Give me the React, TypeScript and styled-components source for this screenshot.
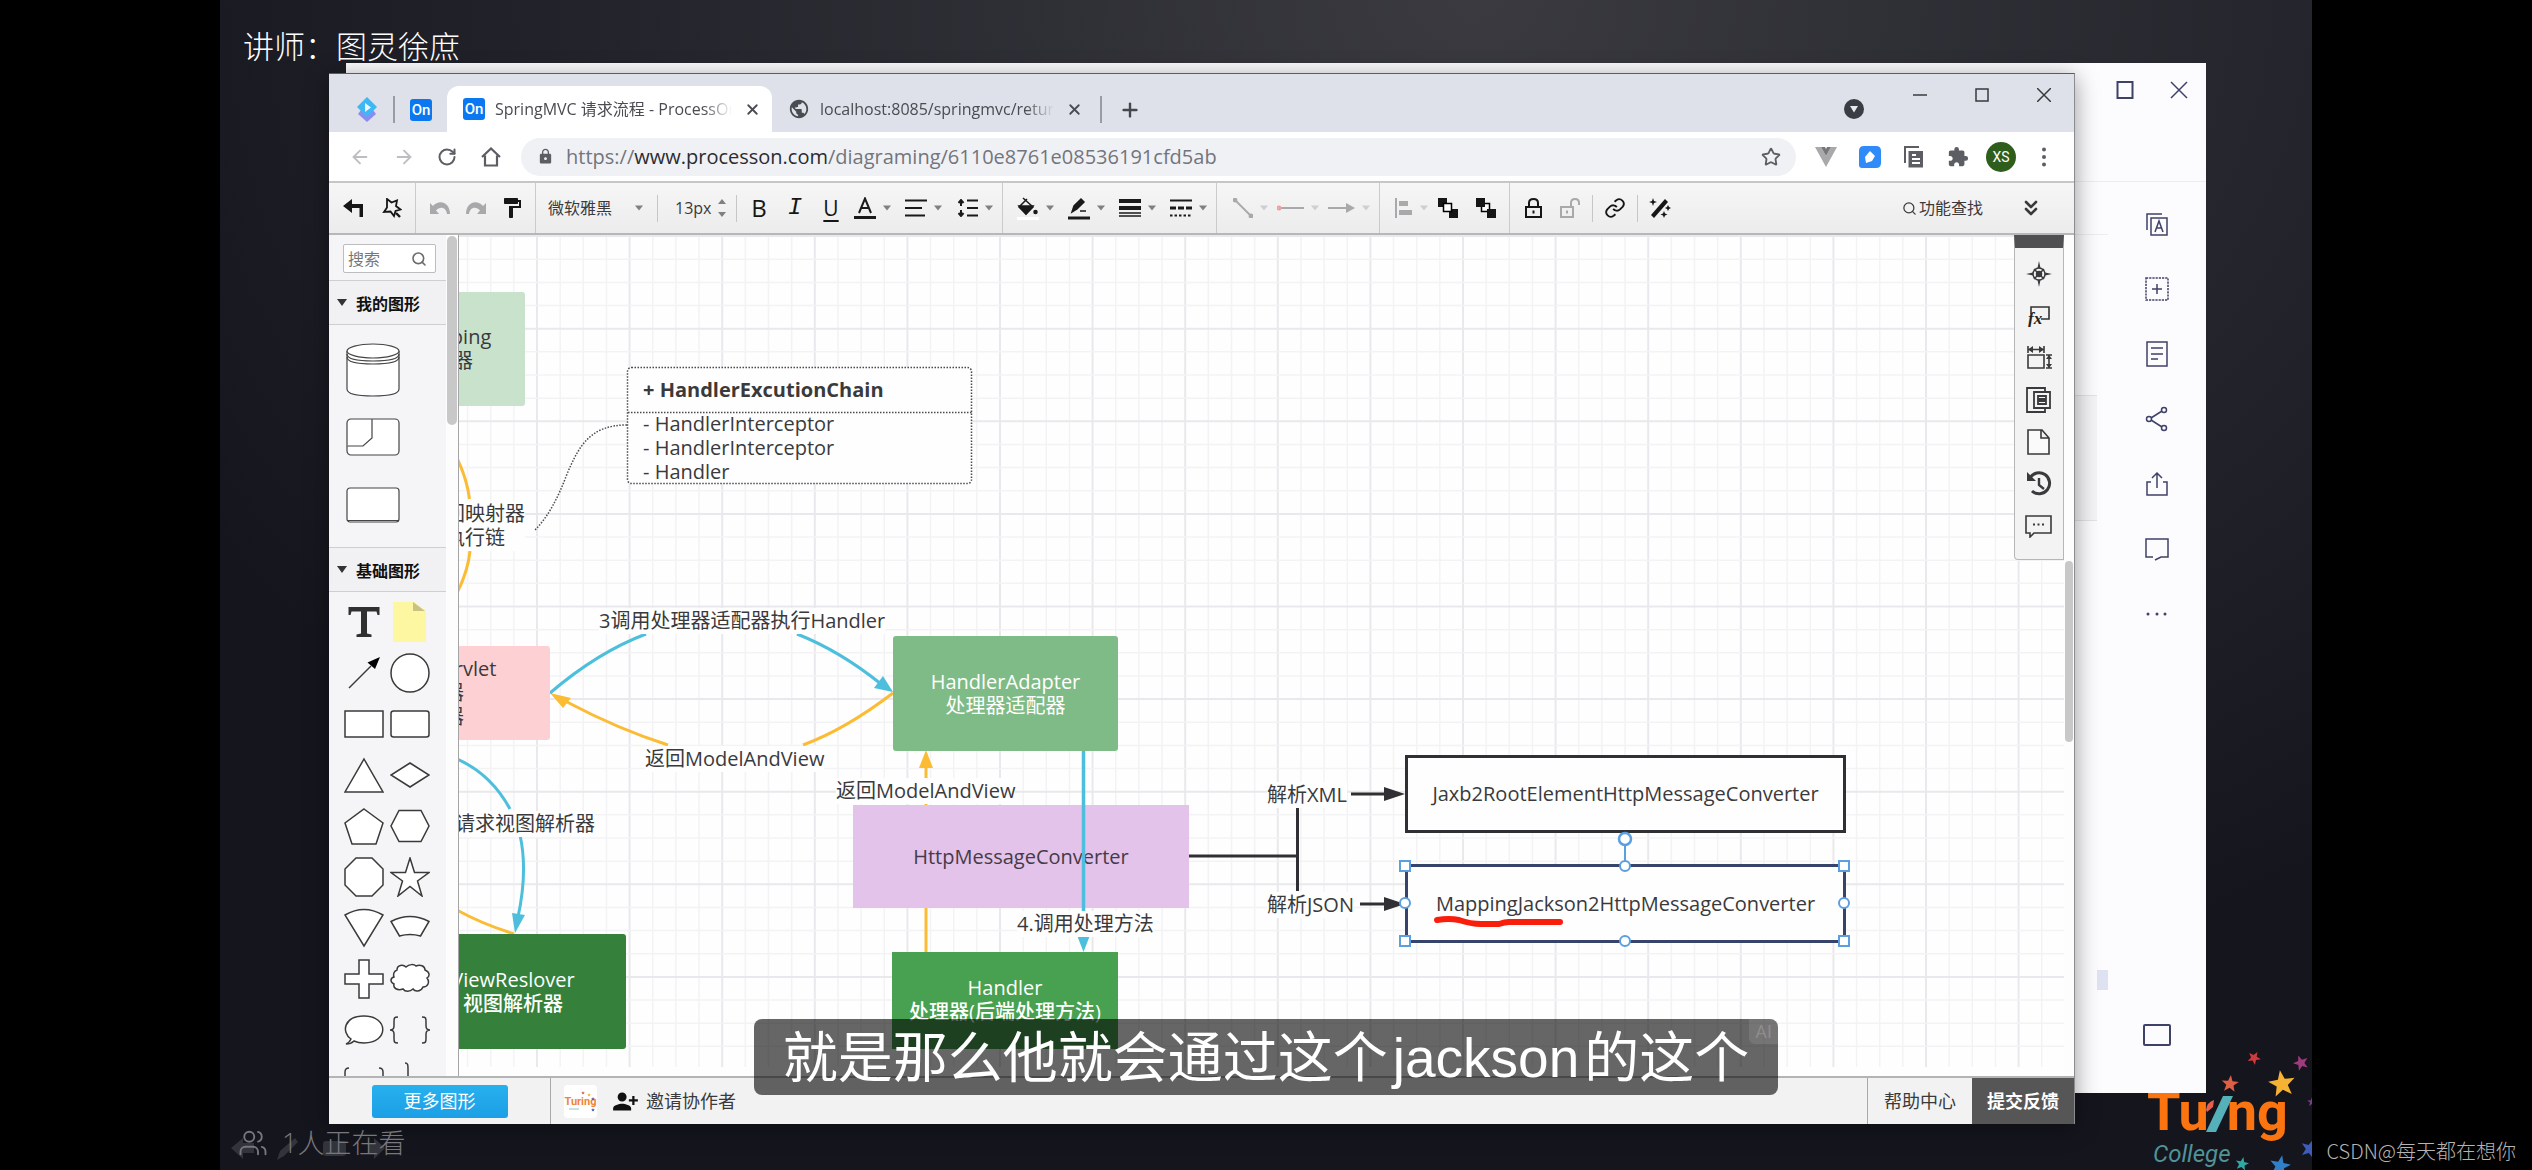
import React from 'react';
import styled, { createGlobalStyle, css } from 'styled-components';
import {
  ArrowLeft, ArrowRight, RotateCw, Star, Plus, X, Search, ChevronsDown, Users,
} from 'lucide-react';
import { MdFormatPaint, MdExtension, MdLock, MdPersonAdd, MdPublic } from 'react-icons/md';

const ui = `"Open Sans", "Noto Sans CJK SC", sans-serif`;
const scroll = { x: 459, y: 234 };
const ink = '#3a3a3c';
const sky = '#4dbfdc';
const amber = '#fbbc34';
const navy = '#3f4268';

const Global = createGlobalStyle`
  *, *::before, *::after { box-sizing: border-box; }
  body { margin: 0; background: #000; font-family: ${ui}; color: ${ink}; }
  button, input, select { font: inherit; color: inherit; border: 0; background: none; padding: 0; margin: 0; outline: 0; }
  a { color: inherit; text-decoration: none; }
  svg { display: block; flex: none; }
`;

const Page = styled.main`
  height: 100vh;
  padding: 0 220px;
  background: #000;
  position: relative;
  overflow: hidden;
`;
const Stage = styled.div`
  position: relative;
  height: 100%;
  overflow: hidden;
  background: radial-gradient(ellipse 70% 90% at 60% 0%, #3a3a40 0%, #25252d 55%, #15151e 100%);
`;
const Lecturer = styled.h1`
  margin: 0;
  padding: 23px 23px;
  font-size: 31px;
  line-height: 46px;
  font-weight: 300;
  color: #fff;
`;
const Watching = styled.div`
  position: absolute;
  left: 18px;
  bottom: 9px;
  display: flex;
  align-items: center;
  gap: 14px;
  font-size: 27px;
  line-height: 36px;
  font-weight: 300;
  color: #77777d;
`;
const Ghosts = styled.svg`
  position: absolute;
  left: 11px;
  bottom: 8px;
`;
const Watermark = styled.div`
  position: absolute;
  right: 16px;
  bottom: 4px;
  font: 20px/30px "Noto Sans CJK SC", sans-serif;
  font-weight: 300;
  color: #b4b4b4;
`;

/* Logo */
const Logo = styled.div`
  position: absolute;
  right: 0;
  bottom: 0;
  width: 166px;
  height: 120px;
`;
const LogoStars = styled.svg`
  position: absolute;
  inset: 0;
`;
const LogoWord = styled.div`
  position: absolute;
  left: 1px;
  top: 32px;
  display: flex;
  align-items: flex-start;
  font: 700 54px/60px Roboto, sans-serif;
  color: #fb7410;
`;
const LogoSub = styled.div`
  position: absolute;
  left: 7px;
  top: 92px;
  font: italic 24px/24px Roboto, sans-serif;
  color: #4f9396;
`;

/* Windows */
const BackWindow = styled.section`
  position: absolute;
  inset: 63px 106px 77px 126px;
  background: #fcfbfe;
  display: flex;
  flex-direction: column;
`;
const BackTitle = styled.div`
  height: 119px;
  padding: 13px 17px 0 0;
  display: flex;
  justify-content: flex-end;
  align-items: flex-start;
  gap: 34px;
  color: ${navy};
  border-bottom: 1px solid #ededf0;
`;
const BackBody = styled.div`
  flex: 1;
  display: flex;
  justify-content: flex-end;
`;
const BackStrip = styled.div`
  width: 34px;
  padding-top: 52px;
  display: flex;
  flex-direction: column;
  align-items: flex-start;
`;
const BackBlock = styled.div`
  width: 23px;
  margin-top: 160px;
  height: 126px;
  background: #f4f3f5;
  border: solid #e3e2e5;
  border-width: 1px 0;
`;
const BackTop = styled.div`
  align-self: stretch;
  border-top: 1px solid #ededf0;
`;
const BackMark = styled.div`
  width: 11px;
  height: 20px;
  margin: 449px 0 0 23px;
  background: #dfe2f0;
`;
const BackTools = styled.nav`
  width: 98px;
  padding: 28px 0 44px;
  display: flex;
  flex-direction: column;
  align-items: center;
  gap: 37px;
  color: ${navy};
`;
const PlainButton = styled.button`
  display: flex;
  align-items: center;
  justify-content: center;
  min-width: 20px;
  height: 28px;
`;
const LastButton = styled(PlainButton)`
  margin-top: auto;
`;

const Browser = styled.section`
  position: absolute;
  inset: 73px 237px 46px 109px;
  display: flex;
  flex-direction: column;
  background: #fff;
  border-top: 1px solid #5b5c62;
  border-right: 1px solid #8b8b90;
  box-shadow: 0 4px 22px rgba(0, 0, 0, 0.4);
`;

/* Tab strip */
const TabStrip = styled.header`
  height: 58px;
  padding-left: 18px;
  display: flex;
  align-items: flex-end;
  background: #dee1e9;
`;
const Pinned = styled.div`
  width: 40px;
  height: 45px;
  display: flex;
  align-items: center;
  justify-content: center;
`;
const TabRule = styled.i`
  width: 2px;
  height: 27px;
  margin: 0 6px 9px;
  background: #9a9ca4;
`;
const OnBadge = styled.span`
  width: 22px;
  height: 22px;
  flex: none;
  border-radius: 3px;
  background: #0b78f2;
  color: #fff;
  font: 500 15px/22px Roboto, sans-serif;
  text-align: center;
`;
const Tab = styled.div<{ $active?: boolean }>`
  width: 322px;
  height: 46px;
  padding: 0 10px 0 16px;
  display: flex;
  align-items: center;
  gap: 10px;
  color: #4a4c52;
  border-radius: 12px 12px 0 0;
  ${p => p.$active && css`
    width: 325px;
    margin-left: 6px;
    background: #fff;
  `}
`;
const TabText = styled.span`
  flex: 1;
  min-width: 0;
  overflow: hidden;
  white-space: nowrap;
  font-size: 16px;
  line-height: 24px;
  mask-image: linear-gradient(90deg, #000 88%, transparent);
`;
const NewTab = styled(PlainButton)`
  width: 44px;
  height: 45px;
  color: #45474d;
`;
const WindowButtons = styled.div`
  margin-left: auto;
  align-self: stretch;
  padding-right: 23px;
  display: flex;
  align-items: flex-start;
`;
const WinBtn = styled.button<{ $low?: boolean }>`
  width: 62px;
  height: 14px;
  margin-top: ${p => (p.$low ? '28px' : '14px')};
  padding-right: ${p => (p.$low ? '1px' : '0')};
  display: flex;
  align-items: center;
  justify-content: flex-end;
`;

/* Address row */
const AddressRow = styled.div`
  height: 51px;
  padding: 0 20px;
  display: flex;
  align-items: center;
  border-bottom: 2px solid #c6c6c8;
  color: #5c5e64;
`;
const NavBtn = styled(PlainButton)<{ $off?: boolean }>`
  width: 44px;
  justify-content: flex-start;
  color: ${p => (p.$off ? '#bdbdc2' : '#5c5e64')};
`;
const AddressPill = styled.div`
  flex: 1;
  height: 38px;
  margin: 0 8px 0 -4px;
  padding: 0 15px 0 16px;
  display: flex;
  align-items: center;
  border-radius: 19px;
  background: #f0f1f5;
`;
const Url = styled.div`
  flex: 1;
  padding-left: 12px;
  font-size: 20px;
  line-height: 28px;
  color: #73757c;
  b { font-weight: 400; color: #2b2c30; }
`;
const ExtBtn = styled(PlainButton)`
  width: 44px;
`;
const Profile = styled.button`
  width: 30px;
  height: 30px;
  margin: 0 18px 0 6px;
  border-radius: 50%;
  background: #2f5e1c;
  color: #fff;
  font: 14px/30px Roboto, sans-serif;
`;

/* Editor toolbar */
const Toolbar = styled.div`
  height: 52px;
  display: flex;
  align-items: stretch;
  background: linear-gradient(#f6f6f7, #ececed);
  border-bottom: 2px solid #b7b7ba;
`;
const Group = styled.div<{ $last?: boolean }>`
  display: flex;
  align-items: center;
  ${p => !p.$last && css`border-right: 1px solid #cbcbce;`}
`;
const Tools = styled(Group)<{ $gap?: number }>`
  padding: 0 5px 0 6px;
  gap: ${p => p.$gap || 0}px;
`;
const Drops = styled(Group)`
  padding-right: 9px;
`;
const Tool = styled.button<{ $off?: boolean }>`
  width: 36px;
  height: 36px;
  display: flex;
  align-items: center;
  justify-content: center;
  color: ${p => (p.$off ? '#a9a9ac' : '#161616')};
`;
const Drop = styled.button<{ $off?: boolean; $tight?: boolean }>`
  width: ${p => (p.$tight ? '42px' : '51px')};
  height: 36px;
  display: flex;
  align-items: center;
  justify-content: flex-end;
  gap: 7px;
  color: ${p => (p.$off ? '#a9a9ac' : '#1a1a1a')};
`;
const Letter = styled.span<{ $kind: 'b' | 'i' | 'u' }>`
  font: 24px/28px "Open Sans", sans-serif;
  ${p => p.$kind === 'i' && css`font-family: "Liberation Mono", monospace; font-style: italic;`}
  ${p => p.$kind === 'u' && css`font-size: 21px; text-decoration: underline; text-underline-offset: 4px;`}
`;
const Rule = styled.i`
  width: 1px;
  height: 27px;
  margin: 0 4px;
  background: #c6c6c9;
`;
const FontSelect = styled.div`
  width: 117px;
  padding: 0 10px 0 12px;
  display: flex;
  align-items: center;
  justify-content: space-between;
  font-size: 16px;
  select { appearance: none; width: 80px; height: 28px; }
`;
const SizeInput = styled.div`
  width: 70px;
  padding-left: 13px;
  display: flex;
  align-items: center;
  gap: 3px;
  font-size: 16px;
  input { width: 40px; height: 28px; }
`;
const Finder = styled.div`
  margin-left: auto;
  padding-right: 31px;
  display: flex;
  align-items: center;
  gap: 36px;
`;
const FindBtn = styled.button`
  display: flex;
  align-items: center;
  gap: 2px;
  font-size: 16px;
  line-height: 24px;
`;

/* Workspace */
const Workspace = styled.div`
  flex: 1;
  min-height: 0;
  display: flex;
`;
const Side = styled.aside`
  width: 117px;
  background: #f5f5f8;
  display: flex;
  flex-direction: column;
  overflow: hidden;
`;
const SearchBox = styled.label`
  margin: 9px 10px 7px 14px;
  height: 29px;
  flex: none;
  padding: 0 8px 0 4px;
  display: flex;
  align-items: center;
  justify-content: space-between;
  background: #fff;
  border: 1px solid #bdbdc0;
  border-radius: 2px;
  font-size: 16px;
  color: #6b6b6e;
  input { width: 56px; height: 24px; }
  input::placeholder { color: #77777a; opacity: 1; }
`;
const SideHead = styled.button`
  height: 45px;
  flex: none;
  padding-left: 8px;
  display: flex;
  align-items: center;
  gap: 9px;
  border: solid #cfcfd2;
  border-width: 1px 0;
  background: #f1f1f3;
  font-size: 16px;
  font-weight: 700;
  color: #111;
`;
const Mine = styled.div`
  flex: none;
  height: 222px;
  padding: 18px 0 0 17px;
  display: flex;
  flex-direction: column;
  gap: 21px;
  svg:last-child { margin-top: 10px; }
`;
const Shapes = styled.div`
  flex: none;
  padding: 4px 0 0 12px;
  display: grid;
  grid-template-columns: 46px 46px;
  grid-auto-rows: 51px;
`;
const ShapeCell = styled.button`
  display: flex;
  align-items: center;
  justify-content: center;
`;
const Track = styled.div<{ $edge?: boolean }>`
  width: ${p => (p.$edge ? '10px' : '13px')};
  padding: 1px 1px 0;
  background: #fdfdfe;
  ${p => !p.$edge && css`border-right: 1px solid #a5a5a8;`}
`;
const Thumb = styled.div<{ $h: number; $skip?: number }>`
  height: ${p => p.$h}px;
  margin-top: ${p => p.$skip || 0}px;
  border-radius: 5px;
  background: #c8c8c9;
`;

/* Canvas */
const Canvas = styled.div`
  position: relative;
  flex: 1;
  min-width: 0;
  overflow: hidden;
  background: #fefefe;
`;
const Layer = styled.svg`
  position: absolute;
  left: 0;
  top: 0;
`;
type Box = { $x: number; $y: number; $w: number; $h: number };
const Node = styled.div<Box & { $bg: string; $fg?: string; $round?: number; $line?: string; $strong?: boolean }>`
  position: absolute;
  left: ${p => p.$x - scroll.x}px;
  top: ${p => p.$y - scroll.y}px;
  width: ${p => p.$w}px;
  height: ${p => p.$h}px;
  display: flex;
  flex-direction: column;
  align-items: center;
  justify-content: center;
  border-radius: ${p => p.$round || 0}px;
  background: ${p => p.$bg};
  color: ${p => p.$fg || ink};
  ${p => p.$line && css`border: 3px solid ${p.$line};`}
  font-size: 20px;
  line-height: 24px;
  font-weight: ${p => (p.$strong ? 500 : 400)};
  white-space: nowrap;
`;
const TopNode = styled(Node)`
  justify-content: flex-start;
  padding-top: 24px;
`;
const EdgeLabel = styled.div<{ $x: number; $y: number }>`
  position: absolute;
  left: ${p => p.$x - scroll.x}px;
  top: ${p => p.$y - scroll.y}px;
  padding: 1px 0;
  background: #fefefe;
  font-size: 20px;
  line-height: 24px;
  text-align: center;
  white-space: nowrap;
`;
const ClassBox = styled.div<Box>`
  position: absolute;
  left: ${p => p.$x - scroll.x}px;
  top: ${p => p.$y - scroll.y}px;
  width: ${p => p.$w}px;
  height: ${p => p.$h}px;
  padding-left: 16px;
  font-size: 20px;
  line-height: 24px;
`;
const ClassTitle = styled.div`
  height: 45px;
  line-height: 45px;
  font-weight: 700;
`;
const Dock = styled.div`
  position: absolute;
  right: 0;
  top: 0;
  width: 50px;
  height: 325px;
  display: flex;
  flex-direction: column;
  align-items: center;
  background: #f3f3f3;
  border: 1px solid #b6b6b8;
  border-top: 13px solid #505052;
  border-radius: 0 0 0 4px;
  padding-top: 12px;
  gap: 14px;
`;

/* Footer */
const Footer = styled.footer`
  height: 48px;
  display: flex;
  align-items: stretch;
  background: #f2f2f2;
  border-top: 2px solid #b4b4b6;
  font-size: 18px;
  line-height: 26px;
`;
const MoreCell = styled.div`
  width: 222px;
  display: flex;
  align-items: center;
  justify-content: center;
  border-right: 1px solid #a9a9ab;
`;
const MoreBtn = styled.button`
  width: 136px;
  height: 33px;
  border-radius: 3px;
  background: linear-gradient(#27b0ee, #1c9fe6);
  color: #fff;
`;
const Invite = styled.button`
  display: flex;
  align-items: center;
  gap: 7px;
  padding-left: 15px;
`;
const InviteIcon = styled(MdPersonAdd)`
  transform: scaleX(-1);
  color: #111;
`;
const Avatar = styled.span`
  width: 33px;
  height: 33px;
  border-radius: 4px;
  background: #fff;
  font: 700 11px/33px Roboto, sans-serif;
  color: #f08436;
  text-align: center;
  position: relative;
`;
const AvatarStars = styled.svg`
  position: absolute;
  inset: 0;
`;
const Avatars = styled.div`
  display: flex;
  align-items: center;
  padding-left: 13px;
`;
const Help = styled.a`
  margin-left: auto;
  width: 105px;
  display: flex;
  align-items: center;
  justify-content: center;
  border-left: 1px solid #a9a9ab;
`;
const Feedback = styled.button`
  width: 102px;
  background: #565656;
  color: #fff;
  font-weight: 700;
`;

/* Subtitle */
const Subtitle = styled.div`
  position: absolute;
  left: 50%;
  bottom: 75px;
  width: 1024px;
  height: 76px;
  margin-left: -512px;
  border-radius: 8px;
  background: rgba(0, 0, 0, 0.6);
  color: #fff;
  font: 55px/79px "Liberation Sans", "Noto Sans CJK SC", sans-serif;
  text-align: center;
  white-space: nowrap;
`;
const Latin = styled.span`
  margin: 0 5px;
`;
const AiBadge = styled.span`
  position: absolute;
  right: 0;
  top: 0;
  width: 29px;
  height: 25px;
  border-radius: 0 8px 0 6px;
  background: rgba(255, 255, 255, 0.1);
  color: #8d8d8d;
  font: 18px/25px Roboto, sans-serif;
`;

const Caret = ({ faint }: { faint?: boolean }) => (
  <svg width="8" height="6" viewBox="0 0 8 6"><path d="M0 0.5h8L4 5.5z" fill={faint ? '#cfcfd1' : '#808083'} /></svg>
);

const Ico = ({ w = 24, h = 24, sw = 2, fill = 'none', children }: { w?: number; h?: number; sw?: number; fill?: string; children: React.ReactNode }) => (
  <svg width={w} height={h} viewBox={`0 0 ${w} ${h}`} fill={fill} stroke="currentColor" strokeWidth={sw}>{children}</svg>
);

const basicShapes: React.ReactNode[] = [
  <path key="t" d="M4.500 5h31v8h-2l-1-3.500h-9.500v22l4.500 1v2.500h-15v-2.500l4.500-1v-22H7.500L6.500 13h-2z" fill="#303030" stroke="none" />,
  <g key="n" stroke="none"><path d="M3 0h21l12 9v31H3z" fill="#fdf7a2" /><path d="M23 0v9h12z" fill="#c9c383" /></g>,
  <g key="a"><path d="M5 35L27 13" /><path d="M36 4L31 16 23.500 9.500z" fill="#000" stroke="none" /></g>,
  <circle key="c" cx="20" cy="20" r="19" />,
  <rect key="r" x="1" y="7" width="38" height="26" />,
  <rect key="rr" x="1" y="7" width="38" height="26" rx="2.500" />,
  <path key="tr" d="M20 4l19 33H1z" />,
  <path key="d" d="M20 8l19 12-19 12L1 20z" />,
  <path key="p" d="M20 3l19 14-7 21H8L1 17z" />,
  <path key="h" d="M9 4.500h22l8 15.500-8 15.500H9L1 20z" />,
  <path key="o" d="M12 1h16l11 11v16L28 39H12L1 28V12z" />,
  <path key="s" d="M20 1l4.500 14.500H39L27.500 24 32 39 20 29.500 8 39l4.500-15L1 15.500h14.500z" />,
  <path key="f" d="M1 7q19-11 38 0L20 38z" />,
  <path key="f2" d="M1 13.500q19-10 38 0L30.500 28q-10.500-3-21 0z" />,
  <path key="x" d="M15 1h10v14h14v10H25v14H15V25H1V15h14z" />,
  <path key="cl" d="M7 11c0-5 6-6 9-3 3-3 8-3 10-1 4-2 9 0 9 4 5 2 5 6 2 8 3 4 1 9-4 9-2 5-8 5-10 2-3 3-8 3-10 0-6 2-10-1-9-5-4-2-4-6 0-7-1-3 0-6 3-7z" />,
  <path key="b" d="M7 29C-3 22 0 6 20 6c25 0 25 27 0 27-5 0-8-1-10-2-2 2-5 3-8 3 3-1 4-3 5-5z" />,
  <path key="br" fill="none" d="M8 7c-4 0-4 1-4 5v4c0 3-1 4-4 4 3 0 4 1 4 4v4c0 4 0 5 4 5M32 7c4 0 4 1 4 5v4c0 3 1 4 4 4-3 0-4 1-4 4v4c0 4 0 5-4 5" />,
  <path key="sq" fill="none" d="M5 7c-3 0-4 1-4 4v28M35 7c3 0 4 1 4 4v28" />,
  <path key="cb" fill="none" d="M15 2c3 0 3 2 3 6v31" />,
];

const gridLines = () => {
  const step = 23.15;
  const out: React.ReactNode[] = [];
  const line = (key: string, major: boolean, at: { x1: number; x2: number; y1: number; y2: number }) => (
    <line key={key} {...at} stroke={major ? '#e9e9ed' : '#f3f3f6'} strokeWidth={major ? 2 : 1.5} />
  );
  for (let i = -3; i <= 66; i++) {
    const x = 537 + i * step;
    out.push(line(`v${i}`, i % 4 === 0, { x1: x, x2: x, y1: 234, y2: 1066 }));
  }
  for (let i = -4; i <= 31; i++) {
    const y = 327.7 + i * step;
    out.push(line(`h${i}`, i % 4 === 0, { x1: 459, x2: 2064, y1: y, y2: y }));
  }
  return out;
};

const starPath = (cx: number, cy: number, r: number, turn = 0) => {
  const pts: string[] = [];
  for (let i = 0; i < 10; i++) {
    const rad = i % 2 ? r * 0.42 : r;
    const a = (Math.PI / 5) * i - Math.PI / 2 + turn;
    pts.push(`${(cx + rad * Math.cos(a)).toFixed(1)},${(cy + rad * Math.sin(a)).toFixed(1)}`);
  }
  return pts.join(' ');
};

const Handles = () => (
  <g fill="#fff" stroke="#5b9fe0" strokeWidth="2">
    <path d="M1625 843v17" />
    {[[1405, 865], [1844, 865], [1405, 940], [1844, 940]].map(([x, y]) => (
      <rect key={`${x}-${y}`} x={x - 5} y={y - 5} width="10" height="10" />
    ))}
    {[[1625, 865], [1625, 940], [1405, 902], [1844, 902]].map(([x, y]) => (
      <circle key={`${x}-${y}`} cx={x} cy={y} r="5" />
    ))}
    <circle cx="1625" cy="838" r="6" strokeWidth="2.500" />
  </g>
);

export default function App() {
  return (
    <Page>
      <Global />
      <Stage>
        <Lecturer>讲师：图灵徐庶</Lecturer>

        <Logo>
          <LogoStars width="166" height="120" viewBox="0 0 166 120">
            <polygon points={starPath(108, 8, 7, 0.5)} fill="#cf3b3d" />
            <polygon points={starPath(155, 13, 8, 0.9)} fill="#9f3b7c" />
            <polygon points={starPath(84, 34, 9, 0.1)} fill="#dd5f45" />
            <polygon points={starPath(136, 34, 14, -0.15)} fill="#f6b232" />
            <polygon points={starPath(166, 52, 5)} fill="#7a3b8c" />
            <polygon points={starPath(96, 114, 7, 0.2)} fill="#2fa7a2" />
            <polygon points={starPath(134, 116, 11, 0.2)} fill="#2f7fc9" />
            <polygon points={starPath(164, 99, 10, 0.3)} fill="#3d5cb6" />
          </LogoStars>
          <LogoWord>
            Tu
            <svg width="18" height="60" viewBox="0 0 18 60" overflow="visible"><path d="M-3 28q1-8 8-10l-1 7-6 5z" fill="#e8604c" /><path d="M-3 50L14 14h10L7 50z" fill="#56b0ba" /></svg>
            ng
          </LogoWord>
          <LogoSub>College</LogoSub>
        </Logo>

        <BackWindow>
          <BackTitle>
            <PlainButton aria-label="最大化"><Ico w={18} h={18} sw={2}><path d="M1.500 1h15v16h-15z" /></Ico></PlainButton>
            <PlainButton aria-label="关闭"><Ico w={18} h={18} sw={1.5}><path d="M1 1l16 16M17 1L1 17" /></Ico></PlainButton>
          </BackTitle>
          <BackBody>
            <BackStrip>
              <BackTop />
              <BackBlock />
              <BackMark />
            </BackStrip>
            <BackTools>
              <PlainButton aria-label="翻译"><Ico w={24} h={24} sw={1.5}><path d="M2 18V2h15M6 6h16v17H6zM10 20l4-11 4 11M11.500 16h5" /></Ico></PlainButton>
              <PlainButton aria-label="截图"><Ico w={24} h={24} sw={1.5}><path strokeDasharray="2.200 1" d="M1 1h22v22H1z" /><path d="M12 7v10M7 12h10" /></Ico></PlainButton>
              <PlainButton aria-label="文档"><Ico w={22} h={26} sw={1.5}><path d="M1 1h20v24H1zM5 7h12M5 13h12M5 18h7" /></Ico></PlainButton>
              <PlainButton aria-label="分享"><Ico w={24} h={26} sw={1.5}><circle cx="4" cy="13" r="2.500" /><circle cx="19" cy="4" r="2.500" /><circle cx="19" cy="22" r="2.500" /><path d="M6 12L17 5M6 14l11 7" /></Ico></PlainButton>
              <PlainButton aria-label="导出"><Ico w={24} h={26} sw={1.5}><path d="M6 11H2v13h20V11h-4M12 17V2M7 7l5-5 5 5" /></Ico></PlainButton>
              <PlainButton aria-label="评论"><Ico w={24} h={24} sw={1.5}><path d="M8 20H1V2h22v18h-7l-6 3" /></Ico></PlainButton>
              <PlainButton aria-label="更多"><Ico w={24} h={4} fill="currentColor" sw={0}><circle cx="3" cy="2" r="1.500" /><circle cx="12" cy="2" r="1.500" /><circle cx="20" cy="2" r="1.500" /></Ico></PlainButton>
              <LastButton aria-label="窗口"><Ico w={28} h={22}><rect x="1" y="1" width="26" height="20" rx="1" /></Ico></LastButton>
            </BackTools>
          </BackBody>
        </BackWindow>

        <Browser>
          <TabStrip>
            <Pinned>
              <svg width="22" height="26" viewBox="0 0 22 26"><path d="M11 25L2 17l3-4 6 5 6-5 3 4z" fill="#8b8cf0" /><path d="M11 0l10 10-10 10L1 10z" fill="#3db8f5" /><path d="M9 6l6 4.500-6 4.500z" fill="#e9f8ff" /></svg>
            </Pinned>
            <TabRule />
            <Pinned><OnBadge>On</OnBadge></Pinned>
            <Tab $active>
              <OnBadge>On</OnBadge>
              <TabText>SpringMVC 请求流程 - ProcessOn</TabText>
              <PlainButton aria-label="关闭标签页"><X size={17} strokeWidth={2.6} /></PlainButton>
            </Tab>
            <Tab>
              <MdPublic size={22} />
              <TabText>localhost:8085/springmvc/return</TabText>
              <PlainButton aria-label="关闭标签页"><X size={17} strokeWidth={2.6} /></PlainButton>
            </Tab>
            <TabRule />
            <NewTab aria-label="新标签页"><Plus size={22} strokeWidth={2.6} /></NewTab>
            <WindowButtons>
              <WinBtn $low aria-label="搜索标签页"><svg width="20" height="20" viewBox="0 0 20 20"><circle cx="10" cy="10" r="10" fill="#3b3d44" /><path d="M6 7h8l-4 6.500z" fill="#e8eaf0" /></svg></WinBtn>
              <WinBtn aria-label="最小化"><Ico w={14} h={14} sw={1.5}><path d="M0 7h14" /></Ico></WinBtn>
              <WinBtn aria-label="最大化"><Ico w={14} h={14} sw={1.5}><path d="M1 1h12v12H1z" /></Ico></WinBtn>
              <WinBtn aria-label="关闭"><Ico w={14} h={14} sw={1.5}><path d="M0 0l14 14M14 0L0 14" /></Ico></WinBtn>
            </WindowButtons>
          </TabStrip>

          <AddressRow>
            <NavBtn $off aria-label="后退"><ArrowLeft size={22} /></NavBtn>
            <NavBtn $off aria-label="前进"><ArrowRight size={22} /></NavBtn>
            <NavBtn aria-label="刷新"><RotateCw size={20} strokeWidth={2.4} /></NavBtn>
            <NavBtn aria-label="主页"><Ico w={20} h={20} sw={2.2}><path d="M1 10L10 1.500 19 10M4 8.500V18.500h12V8.500" /></Ico></NavBtn>
            <AddressPill>
              <MdLock size={17} />
              <Url>https://<b>www.processon.com</b>/diagraming/6110e8761e08536191cfd5ab</Url>
              <Star size={20} strokeWidth={2.2} />
            </AddressPill>
            <ExtBtn aria-label="Vue"><svg width="22" height="20" viewBox="0 0 22 20"><path d="M0 0h6l5 9 5-9h6L11 20z" fill="#a9a9ac" /><path d="M6 0h4l1 2 1-2h4l-5 9z" fill="#77777a" /></svg></ExtBtn>
            <ExtBtn aria-label="扩展"><svg width="22" height="22" viewBox="0 0 22 22"><path d="M5 0h12q5 0 5 5v12q0 5-5 5H3q-3 0-3-3V5q0-5 5-5z" fill="#2f8bf7" /><path d="M11 5l5 5-3 5-6 2-1-6z" fill="#fff" /></svg></ExtBtn>
            <ExtBtn aria-label="复制"><Ico w={20} h={22} sw={2}><path d="M1 17V1h14" /><path d="M4.500 5H19v16.500H4.500z" fill="currentColor" stroke="none" /><path d="M8 9h4M8 13h8M8 17h8" stroke="#fff" /></Ico></ExtBtn>
            <ExtBtn aria-label="扩展程序"><MdExtension size={22} /></ExtBtn>
            <Profile>XS</Profile>
            <PlainButton aria-label="菜单"><Ico w={4} h={20} fill="currentColor" sw={0}><circle cx="2" cy="2.500" r="2" /><circle cx="2" cy="10" r="2" /><circle cx="2" cy="17.500" r="2" /></Ico></PlainButton>
          </AddressRow>

          <Toolbar>
            <Tools $gap={3}>
              <Tool aria-label="返回"><Ico w={20} h={18} sw={0} fill="currentColor"><path d="M0 7l9-7v5h11v13h-3.500V9H9v5z" /></Ico></Tool>
              <Tool aria-label="收藏"><Ico w={20} h={20} sw={1.8}><path d="M5 1l4.500 3.500L15 2.500l-1 5.500 4.500 3.500-5 1.500-1.500 5-3.500-4.500-6.500.500L5 9.500z" /><path d="M14 15l4 4" strokeWidth="2.400" /></Ico></Tool>
            </Tools>
            <Tools>
              <Tool $off aria-label="撤销"><Ico w={20} h={14} sw={0} fill="currentColor"><path d="M0 2v11h9L6 9.500C10 5 16 6 17 13h3C20 1 9-2 3 5z" /></Ico></Tool>
              <Tool $off aria-label="重做"><Ico w={20} h={14} sw={0} fill="currentColor"><path d="M20 2v11h-9l3-3.500C10 5 4 6 3 13H0C0 1 11-2 17 5z" /></Ico></Tool>
              <Tool aria-label="格式刷"><MdFormatPaint size={24} /></Tool>
            </Tools>
            <Drops>
              <FontSelect>
                <select aria-label="字体" defaultValue="微软雅黑"><option>微软雅黑</option></select>
                <Caret />
              </FontSelect>
              <Rule />
              <SizeInput>
                <input aria-label="字号" defaultValue="13px" />
                <svg width="8" height="18" viewBox="0 0 8 18"><path d="M0 5h8L4 0zM0 13h8l-4 5z" fill="#808083" /></svg>
              </SizeInput>
              <Rule />
              <Tool aria-label="加粗"><Letter $kind="b">B</Letter></Tool>
              <Tool aria-label="斜体"><Letter $kind="i">I</Letter></Tool>
              <Tool aria-label="下划线"><Letter $kind="u">U</Letter></Tool>
              <Drop $tight aria-label="文字颜色"><Ico w={22} h={22} sw={2}><path d="M5 16L11 1.500 17 16M7 11h8" /><path d="M0 20.500h22" strokeWidth="3" /></Ico><Caret /></Drop>
              <Drop aria-label="对齐"><Ico w={22} h={18} sw={2}><path d="M0 1.500h22M0 9h17M0 16.500h20" /></Ico><Caret /></Drop>
              <Drop aria-label="行高"><Ico w={20} h={18} sw={2}><path d="M9 1.500h11M9 9h11M9 16.500h11M3 2v5M3 11v5M0.500 4L3 1l2.500 3M0.500 14L3 17l2.500-3" /></Ico><Caret /></Drop>
            </Drops>
            <Drops>
              <Drop aria-label="填充"><Ico w={22} h={24} sw={1.5}><path d="M6 2l10 9-7 7-7-7 8-8" fill="none" /><path d="M2 10h14l-7 8z" fill="currentColor" /><circle cx="18.500" cy="16" r="1.500" fill="currentColor" /><path d="M0 22.500h22" stroke="#fff" strokeWidth="3" /></Ico><Caret /></Drop>
              <Drop aria-label="线条颜色"><Ico w={22} h={24} sw={1.5}><path d="M4 16l2-6 7-7 3 3-7 7z" fill="currentColor" /><path d="M12 15h6" /><path d="M0 22h22" strokeWidth="3" /></Ico><Caret /></Drop>
              <Drop aria-label="线宽"><Ico w={22} h={18} sw={4}><path d="M0 2h22M0 9h22" /><path d="M0 14h22M0 17h22" strokeWidth="1.500" /></Ico><Caret /></Drop>
              <Drop aria-label="线型"><Ico w={22} h={18} sw={2}><path d="M0 1.500h22" /><path d="M0 9h6M8 9h6M16 9h6" strokeWidth="3" /><path d="M0 16.500h22" strokeDasharray="2.500 2" /></Ico><Caret /></Drop>
            </Drops>
            <Drops>
              <Drop $off aria-label="连线类型"><Ico w={20} h={20} sw={1.8}><path d="M2 2l16 16" /><circle cx="2" cy="2" r="1.500" fill="currentColor" /><circle cx="18" cy="18" r="1.500" fill="currentColor" /></Ico><Caret faint /></Drop>
              <Drop $off aria-label="起点"><Ico w={27} h={8} sw={2}><path d="M2 4h25" /><circle cx="2" cy="4" r="1.500" stroke="#f0a0a0" /></Ico><Caret faint /></Drop>
              <Drop $off aria-label="终点"><Ico w={27} h={10} sw={2}><path d="M0 5h20" /><path d="M18 0l9 5-9 5z" fill="currentColor" stroke="none" /></Ico><Caret faint /></Drop>
            </Drops>
            <Tools $gap={2}>
              <Drop $off $tight aria-label="对齐图形"><Ico w={18} h={20} sw={2}><path d="M1 0v20" /><path d="M4 3h9v5H4zM4 12h13v5H4z" fill="currentColor" stroke="none" /></Ico><Caret faint /></Drop>
              <Tool aria-label="置于顶层"><Ico w={20} h={20} sw={0} fill="currentColor"><path d="M0 0h9v9H0zM11 11h9v9h-9z" /><path d="M5.500 5.500h8v8h-8z" fill="#fff" stroke="#000" strokeWidth="1.500" /></Ico></Tool>
              <Tool aria-label="置于底层"><Ico w={20} h={20} sw={0} fill="currentColor"><path d="M5.500 5.500h8v8h-8z" fill="#fff" stroke="#000" strokeWidth="1.500" /><path d="M0 0h9v9H0zM11 11h9v9h-9z" /></Ico></Tool>
            </Tools>
            <Tools $last>
              <Tool aria-label="锁定"><Ico w={18} h={20} sw={2}><path d="M1 9h15v10H1zM4 9V5q0-4 4.500-4T13 5v4M8.500 12.500v3" /></Ico></Tool>
              <Tool $off aria-label="解锁"><Ico w={20} h={20} sw={2}><path d="M1 9h12v10H1zM11 9V5q0-4 4-4t4 4v2M7 12.500v3" /></Ico></Tool>
              <Rule />
              <Tool aria-label="链接"><svg width="22" height="22" viewBox="0 0 24 24" fill="none" stroke="currentColor" strokeWidth="2"><path d="M10 13a5 5 0 0 0 7.500.500l3-3a5 5 0 0 0-7-7l-2 1.700M14 11a5 5 0 0 0-7.500-.500l-3 3a5 5 0 0 0 7 7l2-1.700" /></svg></Tool>
              <Rule />
              <Tool aria-label="美化"><Ico w={22} h={20} sw={0} fill="currentColor"><path d="M2 17L16 1l3 3L5 20z" /><path d="M4 0l1 3 3 1-3 1-1 3-1-3-3-1 3-1zM19 7l1 2 2 1-2 1-1 2-1-2-2-1 2-1zM15 13l1 2.500 2.500 1-2.500 1-1 2.500-1-2.500-2.500-1 2.500-1z" /></Ico></Tool>
            </Tools>
            <Finder>
              <FindBtn><Search size={15} />功能查找</FindBtn>
              <PlainButton aria-label="收起"><ChevronsDown size={24} strokeWidth={2.6} /></PlainButton>
            </Finder>
          </Toolbar>

          <Workspace>
            <Side>
              <SearchBox><input aria-label="搜索图形" placeholder="搜索" /><Search size={16} strokeWidth={2.4} /></SearchBox>
              <SideHead><svg width="10" height="7" viewBox="0 0 10 7"><path d="M0 0h10L5 7z" fill="#333" /></svg>我的图形</SideHead>
              <Mine>
                <svg width="54" height="54" viewBox="0 0 54 54" fill="#fff" stroke="#444" strokeWidth="1.200"><path d="M1 8v38q0 7 26 7t26-7V8" /><ellipse cx="27" cy="8" rx="26" ry="7" /><path d="M1 11q0 7 26 7t26-7M1 14q0 7 26 7t26-7" fill="none" /></svg>
                <svg width="54" height="38" viewBox="0 0 54 38" fill="#fff" stroke="#444" strokeWidth="1.200"><rect x="1" y="1" width="52" height="36" rx="4" /><path d="M26 1v19l-9 8H1" /></svg>
                <svg width="54" height="36" viewBox="0 0 54 36" fill="#fff" stroke="#444" strokeWidth="1.200"><rect x="1" y="1" width="52" height="34" rx="3" /><path d="M2 33.500h50" /></svg>
              </Mine>
              <SideHead><svg width="10" height="7" viewBox="0 0 10 7"><path d="M0 0h10L5 7z" fill="#333" /></svg>基础图形</SideHead>
              <Shapes>
                {basicShapes.map((s, i) => (
                  <ShapeCell key={i} aria-label={`图形 ${i + 1}`}>
                    <svg width="40" height="40" viewBox="0 0 40 40" fill="#fff" stroke="#3a3a3a" strokeWidth="1.500">{s}</svg>
                  </ShapeCell>
                ))}
              </Shapes>
            </Side>
            <Track><Thumb $h={189} /></Track>

            <Canvas>
              <Layer width="1605" height="843" viewBox="459 234 1605 843">
                {gridLines()}
                <g fill="none" stroke={amber} strokeWidth="3">
                  <path d="M457 457Q467 478 469.500 498M470 550Q468 570 457 592" />
                  <path d="M567 701Q618 728 668 744M803 744Q846 728 893 692" />
                  <path d="M457 909Q480 922 514 933" />
                  <path d="M926 765v190" />
                </g>
                <g fill={amber}><path d="M550 692l21 5-8 10z" /><path d="M926 749l7 18h-14z" /></g>
                <g fill="none" stroke={sky} strokeWidth="3">
                  <path d="M550 692Q598 651 646 633M797 633Q840 650 881 683" />
                  <path d="M457 758Q491 773 510 808M520 834Q528 870 518 916" />
                </g>
                <g fill={sky}><path d="M893 691l-19-4 9-12z" /><path d="M515 932l-3-20 13 2z" /></g>
                <g fill="#fefefe" stroke="#4a4a4a" strokeWidth="1.500" strokeDasharray="1.500 1.500">
                  <path fill="none" d="M627 424C590 424 579 445 567 473C558 497 548 516 535 529" />
                  <rect x="627.500" y="366.500" width="344" height="116" rx="4" />
                  <path d="M628 411.500h344" />
                </g>
                <g fill="none" stroke="#303034" strokeWidth="3">
                  <path d="M1189 855h108M1297.500 807v83M1351 793h35M1360 903h28" />
                </g>
                <g fill="#303034"><path d="M1405 793l-21 7v-14z" /><path d="M1405 903l-21 7v-14z" /></g>
              </Layer>

              <Node $x={301} $y={291} $w={224} $h={114} $bg="#c9e2cc" $round={3}><span>HandlerMapping</span><span>处理器映射器</span></Node>
              <ClassBox $x={627} $y={366} $w={345} $h={117}>
                <ClassTitle>+ HandlerExcutionChain</ClassTitle>
                <div>- HandlerInterceptor</div>
                <div>- HandlerInterceptor</div>
                <div>- Handler</div>
              </ClassBox>
              <Node $x={278} $y={645} $w={272} $h={94} $bg="#fdd1d3" $round={3}><span>DispatcherServlet</span><span>前端控制器</span><span>前端控制器</span></Node>
              <Node $x={400} $y={933} $w={226} $h={115} $bg="#35813c" $fg="#fff" $round={3} $strong><span>ViewReslover</span><span>视图解析器</span></Node>
              <Node $x={893} $y={635} $w={225} $h={115} $bg="#7fbb86" $fg="#fff" $round={3}><span>HandlerAdapter</span><span>处理器适配器</span></Node>
              <Node $x={853} $y={804} $w={336} $h={103} $bg="#e3c3e9" $fg="#463a49">HttpMessageConverter</Node>
              <TopNode $x={892} $y={951} $w={226} $h={97} $bg="#48a150" $fg="#fff" $strong><span>Handler</span><span>处理器(后端处理方法)</span></TopNode>
              <Node $x={1405} $y={754} $w={441} $h={78} $bg="#fefefe" $line="#303034">Jaxb2RootElementHttpMessageConverter</Node>
              <Node $x={1405} $y={863} $w={441} $h={79} $bg="#fefefe" $line="#36446c">MappingJackson2HttpMessageConverter</Node>

              <Layer width="1605" height="843" viewBox="459 234 1605 843">
                <path d="M1083.500 750v190" stroke={sky} strokeWidth="3.500" />
                <path d="M1083.500 951l-7-18h14z" fill={sky} />
                <Handles />
                <path d="M1437 919q12-2 22 0 12 4 22 4h18q6-2 10-2h51" fill="none" stroke="#f91d0c" strokeWidth="6" strokeLinecap="round" />
              </Layer>

              <EdgeLabel $x={425} $y={500}>返回映射器<br />执行链</EdgeLabel>
              <EdgeLabel $x={599} $y={607}>3调用处理器适配器执行Handler</EdgeLabel>
              <EdgeLabel $x={645} $y={745}>返回ModelAndView</EdgeLabel>
              <EdgeLabel $x={836} $y={777}>返回ModelAndView</EdgeLabel>
              <EdgeLabel $x={455} $y={810}>请求视图解析器</EdgeLabel>
              <EdgeLabel $x={1017} $y={910}>4.调用处理方法</EdgeLabel>
              <EdgeLabel $x={1267} $y={781}>解析XML</EdgeLabel>
              <EdgeLabel $x={1267} $y={891}>解析JSON</EdgeLabel>

              <Dock>
                <PlainButton aria-label="导航"><Ico w={26} h={26} sw={1.5}><circle cx="13" cy="13" r="6" /><circle cx="13" cy="13" r="2.500" fill="currentColor" /><path d="M13 0l1.500 7h-3zM13 26l1.500-7h-3zM0 13l7-1.500v3zM26 13l-7-1.500v3z" fill="currentColor" stroke="none" /><path d="M8 8l10 10M18 8L8 18" /></Ico></PlainButton>
                <PlainButton aria-label="公式"><svg width="24" height="22" viewBox="0 0 24 22"><path d="M4 9V2h18v12h-8" fill="none" stroke="#333" strokeWidth="1.600" /><text x="1" y="19" fontFamily="Liberation Serif" fontStyle="italic" fontWeight="700" fontSize="17" fill="#222">fx</text></svg></PlainButton>
                <PlainButton aria-label="尺寸"><Ico w={26} h={24} sw={1.6}><path d="M2 9h16v13H2zM2 3.500h16M2 0v7M18 0v7M23 9v13M20 9h6M20 22h6" /><path d="M7 0L2 3.500 7 7zM13 0l5 3.500L13 7zM20 13l3-4 3 4zM20 18l3 4 3-4z" fill="currentColor" stroke="none" /></Ico></PlainButton>
                <PlainButton aria-label="图层"><Ico w={26} h={26} sw={1.8}><path d="M8 25H1V1h18v4M19 22v3H8" /><path d="M8 5h16v16H8zM12 9h8v3h-8zM12 14h8v3h-8z" /></Ico></PlainButton>
                <PlainButton aria-label="页面"><Ico w={24} h={26} sw={1.6} fill="#fafafa"><path d="M1 1h14l7 8v16H1zM14 1v8h8" /></Ico></PlainButton>
                <PlainButton aria-label="历史"><Ico w={26} h={26} sw={3}><path d="M4 7a10.500 10.500 0 1 1 2 13" /><path d="M1 1v9h9z" fill="currentColor" stroke="none" /><path d="M13 7v7l5 4" strokeWidth="2.400" /></Ico></PlainButton>
                <PlainButton aria-label="评论"><Ico w={28} h={24} sw={1.6}><path d="M1 2h25v17H9l-4 4v-4H1z" /><path d="M8 10.500h12" strokeWidth="2" strokeDasharray="2 2.500" /></Ico></PlainButton>
              </Dock>
            </Canvas>
            <Track $edge><Thumb $h={181} $skip={325} /></Track>
          </Workspace>

          <Footer>
            <MoreCell><MoreBtn>更多图形</MoreBtn></MoreCell>
            <Avatars>
              <Avatar>
                Turing
                <AvatarStars width="33" height="33" viewBox="0 0 33 33">
                  <polygon points={starPath(19, 8, 2)} fill="#e0604f" />
                  <polygon points={starPath(25, 10, 2)} fill="#f6b232" />
                  <polygon points={starPath(29, 14, 2)} fill="#7a4b9c" />
                  <polygon points={starPath(29, 25, 2)} fill="#3d5cb6" />
                  <path d="M5 24h10" stroke="#8cc7c4" />
                </AvatarStars>
              </Avatar>
            </Avatars>
            <Invite><InviteIcon size={27} />邀请协作者</Invite>
            <Help href="#help">帮助中心</Help>
            <Feedback>提交反馈</Feedback>
          </Footer>
        </Browser>

        <Ghosts width="160" height="26" viewBox="0 0 160 26" fill="#33333b">
          <path d="M0 12L12 2v5h11v10H12v6z" /><path d="M46 24l3-9L64 2l3 4-14 14z" /><rect x="92" y="5" width="23" height="15" rx="3" /><path d="M154 12L143 2v5h-6v10h6v6z" />
        </Ghosts>
        <Watching><Users size={30} strokeWidth={1.5} />1人正在看</Watching>
        <Subtitle>就是那么他就会通过这个<Latin>jackson</Latin>的这个<AiBadge>AI</AiBadge></Subtitle>
      </Stage>
      <Watermark>CSDN@每天都在想你</Watermark>
    </Page>
  );
}
